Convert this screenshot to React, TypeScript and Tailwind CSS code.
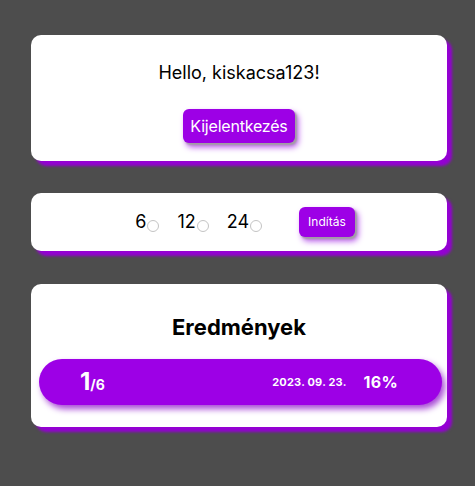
import React from 'react';

const cardCls =
  'w-[416px] bg-white rounded-[10px] shadow-[5px_5px_3px_#9400d3]';

const btnCls =
  'bg-[#9d00e6] text-white rounded-[6px] shadow-[2px_2px_2px_#a0a0a0,3px_4px_6px_#b44dea]';

function Radio({ label }: { label: string }) {
  return (
    <label className="flex items-end text-[18px] text-black leading-none">
      {label}
      <span className="ml-[1px] mb-[-1px] w-[12px] h-[12px] rounded-full border border-[#c4c4c4] bg-white" />
    </label>
  );
}

export default function App() {
  return (
    <div
      className="min-h-[486px] bg-[#4d4d4d] flex flex-col items-center pt-[35px] pl-[3px] gap-[32px]"
      style={{ fontFamily: 'Inter, "Noto Sans", sans-serif' }}
    >
      <div className={`${cardCls} h-[126px] flex flex-col items-center pt-[26px]`}>
        <div className="text-[18px] text-black leading-[24px]">Hello, kiskacsa123!</div>
        <button className={`${btnCls} mt-[24px] h-[34px] px-[7px] text-[16px] tracking-[-0.2px]`}>Kijelentkezés</button>
      </div>

      <div className={`${cardCls} h-[58px] flex items-center justify-center pl-[12px]`}>
        <div className="flex items-center gap-[18px]">
          <Radio label="6" />
          <Radio label="12" />
          <Radio label="24" />
        </div>
        <button className={`${btnCls} ml-[37px] h-[30px] px-[9px] text-[12px]`}>Indítás</button>
      </div>

      <div className={`${cardCls} h-[143px] flex flex-col items-center pt-[29px] mt-[1px]`}>
        <div className="text-[22px] font-bold text-black leading-[28px]">Eredmények</div>
        <div className="mt-[18px] self-start ml-[8px] w-[403px] h-[46px] rounded-full bg-[#9d00e6] shadow-[3px_4px_6px_#a84ad6] flex items-center text-white font-bold">
          <div className="ml-[41px] flex items-baseline">
            <span className="text-[24px] leading-none">1</span>
            <span className="text-[14px]">/6</span>
          </div>
          <div className="ml-auto text-[11px] tracking-[0.2px]">2023. 09. 23.</div>
          <div className="ml-[17px] mr-[44px] text-[16px] tracking-[0.3px]">16%</div>
        </div>
      </div>
    </div>
  );
}
